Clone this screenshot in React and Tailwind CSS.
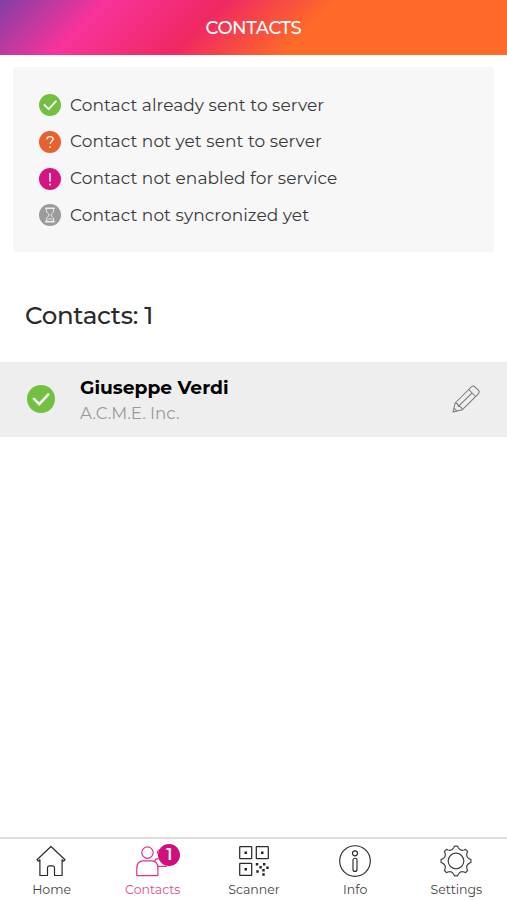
import React from "react";

function Check({ className }) {
  return (
    <svg viewBox="0 0 28 28" className={className}>
      <circle cx="14" cy="14" r="14" fill="#73bf3f" />
      <path d="M6.2 13.2l6.1 6L22 8.7" fill="none" stroke="#fff" strokeWidth="2.5" />
    </svg>
  );
}

function Question() {
  return (
    <svg viewBox="0 0 22 22" className="size-[22px]">
      <circle cx="11" cy="11" r="11" fill="#e8602f" />
      <path d="M7.9 8.3c.1-1.7 1.4-2.7 3.1-2.7s3.1 1 3.1 2.5c0 2.1-2.9 2.4-2.9 5" fill="none" stroke="#fff" strokeWidth="1.3" />
      <circle cx="11.1" cy="16.1" r="0.95" fill="#fff" />
    </svg>
  );
}

function Exclamation() {
  return (
    <svg viewBox="0 0 22 22" className="size-[22px]">
      <circle cx="11" cy="11" r="11" fill="#d3157f" />
      <path d="M11 5v8.7" stroke="#fff" strokeWidth="1.5" />
      <circle cx="11" cy="16.4" r="1" fill="#fff" />
    </svg>
  );
}

function Hourglass() {
  return (
    <svg viewBox="0 0 22 22" className="size-[22px]">
      <circle cx="11" cy="11" r="11" fill="#9b9b9b" />
      <g fill="none" stroke="#eee" strokeWidth="1" strokeLinejoin="round">
        <path d="M6.2 4.2h9.6M6.2 17.8h9.6" strokeWidth="1.5" />
        <path d="M7.4 4.5v2.4c0 2 2.6 2.7 2.6 4.1s-2.6 2.2-2.6 4.2v2.3M14.6 4.5v2.4c0 2-2.6 2.7-2.6 4.1s2.6 2.2 2.6 4.2v2.3M8.7 16.5c0-2.3 4.6-2.3 4.6 0" />
      </g>
    </svg>
  );
}

function Pencil() {
  return (
    <svg viewBox="0 0 28 28" className="mb-0.5 size-7" fill="none" stroke="#777" strokeWidth="1.05" strokeLinejoin="round">
      <path d="M1 27l2.2-9L19.2 2c1.2-1.2 2.6-1.2 3.7-.2l3.4 3.3c1.1 1.2 1.1 2.5 0 3.7L10.2 24.8z" />
      <path d="M16.7 4.5l6.9 7M3.2 18c2 .1 3 1.3 3.1 3.3 2.2 0 3.5 1.2 3.9 3.5M6.3 21.3L20.2 7.9M2.2 23.3l2.7 2.6" />
    </svg>
  );
}

function HomeIcon() {
  return (
    <svg viewBox="0 0 32 32" className="mr-[1.5px] size-8" fill="none" stroke="#2b2b2b" strokeWidth="1.2" strokeLinejoin="round">
      <path d="M16 1.5L2 14.8l1.3 1.3 1.6-1.3v15.7h7.6v-7.8c0-1.3.6-1.9 1.7-1.9h3.6c1.1 0 1.7.6 1.7 1.9v7.8h7.6V14.8l1.6 1.3 1.3-1.3z" />
    </svg>
  );
}

function ContactsIcon() {
  return (
    <div className="relative mr-[1px] size-8">
      <svg viewBox="0 0 32 32" className="size-8" fill="none" stroke="#d8348e" strokeWidth="1.2" strokeLinejoin="round">
        <circle cx="11.5" cy="7.6" r="5.7" />
        <path d="M.8 30.6V23.1c0-4.6 2.5-7.2 6.4-7.2h8.3c3.9 0 6.4 2.6 6.4 7.2v7.5z" />
        <path d="M24.8 4.5c-2.5 0-4 2-3.3 4.2M18.4 16.1c.9-1.8 2.3-2.7 4-2.8M21.9 21.3h9" />
      </svg>
      <div className="absolute -top-px left-[22px] flex size-[22px] items-center justify-center rounded-full bg-[#ce0f7c] text-[16px] font-semibold text-white">1</div>
    </div>
  );
}

function ScannerIcon() {
  return (
    <svg viewBox="0 0 32 32" className="size-8" fill="none" stroke="#2b2b2b" strokeWidth="1.25">
      <rect x="1.7" y="1.7" width="12" height="12" rx="0.6" />
      <rect x="18.3" y="1.7" width="12" height="12" rx="0.6" />
      <rect x="1.7" y="18.3" width="12" height="12" rx="0.6" />
      <path stroke="none" fill="#222" d="M6.5 6.5h2.5v2.5H6.5zM23 6.5h2.5v2.5H23zM6.5 23h2.5v2.5H6.5zM17.8 18h2.4v2.4h-2.4zM25 18h2.4v2.4H25zM21.4 21h2.4v2.4h-2.4zM28.3 21.5h2.4v2.4h-2.4zM18.3 25.3h2.4v2.4h-2.4zM24.3 24h2.4v2.4h-2.4zM24.3 28.3h2.4v2.4h-2.4z" />
    </svg>
  );
}

function InfoIcon() {
  return (
    <svg viewBox="0 0 32 32" className="size-8" fill="none" stroke="#2b2b2b" strokeWidth="1.15">
      <circle cx="16" cy="16" r="15.3" />
      <circle cx="16" cy="8.3" r="2.5" />
      <rect x="14" y="13.2" width="4" height="13.2" rx="2" />
    </svg>
  );
}

function gearPath() {
  const point = (radius, degrees) => {
    const a = (degrees * Math.PI) / 180;
    return `${(16 + radius * Math.cos(a)).toFixed(2)} ${(16 + radius * Math.sin(a)).toFixed(2)}`;
  };
  let d = "";
  for (let i = 0; i < 8; i++) {
    const a = i * 45 - 90;
    d += `${i ? "L" : "M"}${point(15, a - 5.5)}L${point(15, a + 5.5)}L${point(13.6, a + 9)}A4.9 4.9 0 0 0 ${point(13.6, a + 36)}`;
  }
  return d + "Z";
}

function SettingsIcon() {
  return (
    <svg viewBox="0 0 32 32" className="size-8" fill="none" stroke="#444" strokeWidth="1.2" strokeLinejoin="round">
      <path d={gearPath()} />
      <circle cx="16" cy="16" r="7.8" />
    </svg>
  );
}

const legend = [
  { icon: <Check className="size-[22px]" />, text: "Contact already sent to server" },
  { icon: <Question />, text: "Contact not yet sent to server" },
  { icon: <Exclamation />, text: "Contact not enabled for service" },
  { icon: <Hourglass />, text: "Contact not syncronized yet" },
];

const tabs = [
  { icon: <HomeIcon />, label: "Home", color: "text-[#444]" },
  { icon: <ContactsIcon />, label: "Contacts", color: "text-[#e04c94]" },
  { icon: <ScannerIcon />, label: "Scanner", color: "text-[#444]" },
  { icon: <InfoIcon />, label: "Info", color: "text-[#444]" },
  { icon: <SettingsIcon />, label: "Settings", color: "text-[#444]" },
];

export default function App() {
  return (
    <div className="flex h-[900px] w-[507px] flex-col overflow-hidden bg-white font-['Montserrat','Inter',sans-serif]">
      <header className="flex h-[54.5px] shrink-0 items-center justify-center bg-[linear-gradient(135deg,#813fa5_0%,#f8339b_19%,#ef2863_40%,#ff6a28_60%,#ff6a28_100%)] text-[18px] font-medium text-white">
        <h1 className="pt-[3px] tracking-[-0.4px]">CONTACTS</h1>
      </header>

      <section className="mx-[13px] mt-[12.5px] flex h-[185px] shrink-0 flex-col rounded-[3px] bg-[#f7f7f7] pt-5 pl-[26px]">
        {legend.map((row) => (
          <div key={row.text} className="flex h-[36.7px] items-center gap-[9px] text-[17px] text-[#3a3a3a]">
            {row.icon}
            <span className="tracking-[0.05px]">{row.text}</span>
          </div>
        ))}
      </section>

      <h2 className="mt-[44.5px] ml-[25px] h-9 text-[24.5px] leading-9 font-medium tracking-[-0.3px] text-[#2a2a2a]">Contacts: 1</h2>

      <div className="mt-[29.5px] flex h-[75px] shrink-0 items-center bg-[#eee] pr-[27px] pl-[27px]">
        <Check className="mb-0.5 size-7" />
        <div className="ml-[25px] flex-1 pt-[2px]">
          <div className="text-[18.7px] leading-[26px] font-bold text-black">Giuseppe Verdi</div>
          <div className="text-[16.7px] leading-[25px] text-[#999]">A.C.M.E. Inc.</div>
        </div>
        <Pencil />
      </div>

      <nav className="mt-auto grid h-[63px] shrink-0 grid-cols-5 border-t-2 border-[#dedede] pt-[6px] pl-px">
        {tabs.map((tab) => (
          <div key={tab.label} className="flex flex-col items-center">
            {tab.icon}
            <span className={`mt-1 text-[12.5px] leading-[18px] ${tab.color}`}>{tab.label}</span>
          </div>
        ))}
      </nav>
    </div>
  );
}
